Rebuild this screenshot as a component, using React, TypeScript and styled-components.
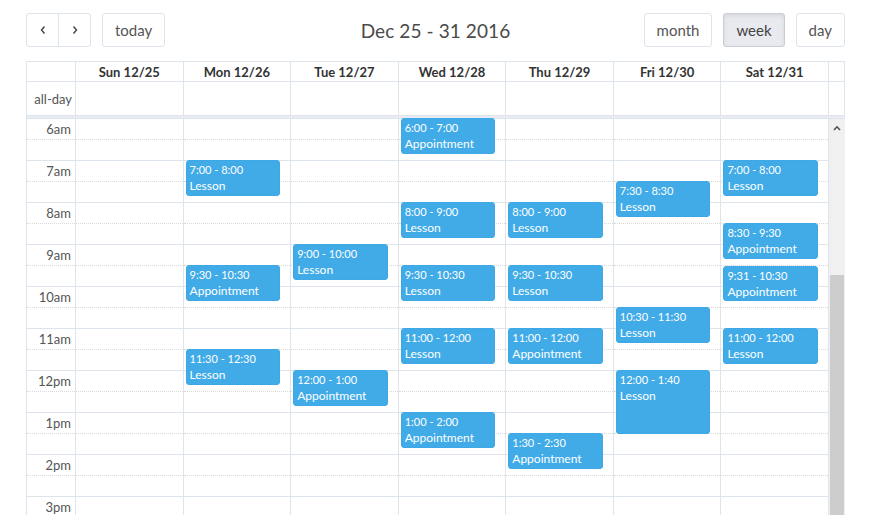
import React from 'react';
import styled, { createGlobalStyle } from 'styled-components';

const GlobalStyle = createGlobalStyle`
    html, body {
        margin: 0;
        padding: 0;
        overflow: hidden;
        background: #ffffff;
        font-family: Lato, "Open Sans", "Liberation Sans", sans-serif;
    }
`;

const HOUR_HEIGHT = 42;
const FIRST_HOUR = 6;
const LINE = '#dde4ec';

interface CalEvent {
    day: number;
    start: string;
    end: string;
    title: string;
}

const days = ['Sun 12/25', 'Mon 12/26', 'Tue 12/27', 'Wed 12/28', 'Thu 12/29', 'Fri 12/30', 'Sat 12/31'];
const hours = ['6am', '7am', '8am', '9am', '10am', '11am', '12pm', '1pm', '2pm', '3pm', '4pm'];

const events: CalEvent[] = [
    { day: 1, start: '7:00', end: '8:00', title: 'Lesson' },
    { day: 1, start: '9:30', end: '10:30', title: 'Appointment' },
    { day: 1, start: '11:30', end: '12:30', title: 'Lesson' },
    { day: 2, start: '9:00', end: '10:00', title: 'Lesson' },
    { day: 2, start: '12:00', end: '1:00', title: 'Appointment' },
    { day: 3, start: '6:00', end: '7:00', title: 'Appointment' },
    { day: 3, start: '8:00', end: '9:00', title: 'Lesson' },
    { day: 3, start: '9:30', end: '10:30', title: 'Lesson' },
    { day: 3, start: '11:00', end: '12:00', title: 'Lesson' },
    { day: 3, start: '1:00', end: '2:00', title: 'Appointment' },
    { day: 4, start: '8:00', end: '9:00', title: 'Lesson' },
    { day: 4, start: '9:30', end: '10:30', title: 'Lesson' },
    { day: 4, start: '11:00', end: '12:00', title: 'Appointment' },
    { day: 4, start: '1:30', end: '2:30', title: 'Appointment' },
    { day: 5, start: '7:30', end: '8:30', title: 'Lesson' },
    { day: 5, start: '10:30', end: '11:30', title: 'Lesson' },
    { day: 5, start: '12:00', end: '1:40', title: 'Lesson' },
    { day: 6, start: '7:00', end: '8:00', title: 'Lesson' },
    { day: 6, start: '8:30', end: '9:30', title: 'Appointment' },
    { day: 6, start: '9:31', end: '10:30', title: 'Appointment' },
    { day: 6, start: '11:00', end: '12:00', title: 'Lesson' },
];

// times are written 12h without am/pm, anything below 6 is afternoon
const toMinutes = (t: string): number => {
    const [h, m] = t.split(':').map(Number);
    const hour = h < 6 ? h + 12 : h;
    return hour * 60 + m;
};

const Page = styled.div`
    padding: 13px 0 0 26px;
    width: 819px;
`;

const Toolbar = styled.div`
    display: grid;
    grid-template-columns: 1fr auto 1fr;
    align-items: center;
    height: 34px;
    margin-bottom: 14px;
`;

const ToolGroup = styled.div<{ $right?: boolean }>`
    display: flex;
    gap: 11px;
    justify-content: ${(p) => (p.$right ? 'flex-end' : 'flex-start')};
`;

const ButtonGroup = styled.div`
    display: flex;
`;

const Button = styled.button<{ $active?: boolean; $square?: boolean; $joinLeft?: boolean; $joinRight?: boolean }>`
    height: 34px;
    min-width: ${(p) => (p.$square ? '33px' : 'auto')};
    padding: ${(p) => (p.$square ? '0' : '0 12px')};
    display: flex;
    align-items: center;
    justify-content: center;
    font-family: Lato, "Open Sans", sans-serif;
    font-size: 15px;
    color: ${(p) => (p.$active ? '#444' : '#555')};
    background: ${(p) => (p.$active ? '#e9e9f0' : '#ffffff')};
    border: 1px solid ${(p) => (p.$active ? '#c8ced6' : '#dde4ec')};
    box-shadow: ${(p) => (p.$active ? 'inset 0 2px 4px rgba(0,0,0,0.08)' : 'none')};
    border-radius: ${(p) =>
        p.$joinLeft ? '0 3px 3px 0' : p.$joinRight ? '3px 0 0 3px' : '3px'};
    margin-left: ${(p) => (p.$joinLeft ? '-1px' : '0')};
`;

const Title = styled.h2`
    margin: 0;
    font-size: 19px;
    font-weight: 400;
    color: #4a4a4a;
    letter-spacing: 0.1px;
`;

const Calendar = styled.div`
    border: 1px solid ${LINE};
    border-right: none;
    border-bottom: none;
`;

const HeadRow = styled.div<{ $height: number }>`
    display: grid;
    grid-template-columns: 49px repeat(7, 1fr) 16px;
    height: ${(p) => p.$height}px;
    border-bottom: 1px solid ${LINE};
`;

const HeadCell = styled.div`
    border-right: 1px solid ${LINE};
    font-size: 13px;
    font-weight: 700;
    color: #333;
    display: flex;
    align-items: center;
    justify-content: center;
`;

const AxisLabel = styled.div`
    border-right: 1px solid ${LINE};
    font-size: 13px;
    color: #555;
    text-align: right;
    padding: 9px 3px 0 0;
`;

const PlainCell = styled.div<{ $edge?: boolean }>`
    border-right: 1px solid ${LINE};
`;

const Divider = styled.div`
    height: 2px;
    background: #e9edf1;
    border-bottom: 1px solid ${LINE};
`;

const Body = styled.div`
    display: flex;
`;

const TimeGrid = styled.div`
    flex: 1;
    display: grid;
    grid-template-columns: 49px repeat(7, 1fr);
`;

const Column = styled.div`
    position: relative;
    border-right: 1px solid ${LINE};
`;

const HourSlot = styled.div`
    height: ${HOUR_HEIGHT}px;
    box-sizing: border-box;
    border-bottom: 1px solid ${LINE};
    display: flex;
    flex-direction: column;
`;

const HalfSlot = styled.div<{ $dotted?: boolean }>`
    flex: 1;
    border-top: ${(p) => (p.$dotted ? '1px dotted #d9d9d9' : 'none')};
    font-size: 13px;
    color: #555;
    text-align: right;
    padding: 2px 4px 0 0;
`;

const Event = styled.div`
    position: absolute;
    left: 2px;
    right: 10px;
    box-sizing: border-box;
    background: #41abe8;
    border: 1px solid #3ea8e6;
    border-radius: 3px;
    color: #ffffff;
    padding: 1px 3px 0;
    overflow: hidden;
`;

const EventTime = styled.div`
    font-size: 11px;
    line-height: 16px;
`;

const EventTitle = styled.div`
    font-size: 12px;
    line-height: 15px;
`;

const ScrollTrack = styled.div`
    width: 16px;
    background: #f0f0f0;
    display: flex;
    flex-direction: column;
    align-items: stretch;
`;

const ScrollArrow = styled.div`
    height: 156px;
    display: flex;
    justify-content: center;
    padding-top: 6px;
    box-sizing: border-box;
`;

const ScrollThumb = styled.div`
    flex: 1;
    margin: 0 1px;
    background: #cdcdcd;
`;

const Chevron = ({ dir }: { dir: 'left' | 'right' }) => (
    <svg width="8" height="10" viewBox="0 0 8 10">
        <polyline
            points={dir === 'left' ? '5.5,1.5 2.5,5 5.5,8.5' : '2.5,1.5 5.5,5 2.5,8.5'}
            fill="none"
            stroke="#444"
            strokeWidth="1.4"
        />
    </svg>
);

export default function App() {
    return (
        <>
            <GlobalStyle />
            <Page>
                <Toolbar>
                    <ToolGroup>
                        <ButtonGroup>
                            <Button $square $joinRight><Chevron dir="left" /></Button>
                            <Button $square $joinLeft><Chevron dir="right" /></Button>
                        </ButtonGroup>
                        <Button>today</Button>
                    </ToolGroup>
                    <Title>Dec 25 - 31 2016</Title>
                    <ToolGroup $right>
                        <Button>month</Button>
                        <Button $active>week</Button>
                        <Button>day</Button>
                    </ToolGroup>
                </Toolbar>
                <Calendar>
                    <HeadRow $height={19}>
                        <PlainCell />
                        {days.map((d) => (
                            <HeadCell key={d}>{d}</HeadCell>
                        ))}
                        <PlainCell />
                    </HeadRow>
                    <HeadRow $height={33}>
                        <AxisLabel>all-day</AxisLabel>
                        {days.map((d) => (
                            <PlainCell key={d} />
                        ))}
                        <PlainCell />
                    </HeadRow>
                    <Divider />
                    <Body>
                        <TimeGrid>
                            <Column>
                                {hours.map((h) => (
                                    <HourSlot key={h}>
                                        <HalfSlot>{h}</HalfSlot>
                                        <HalfSlot $dotted />
                                    </HourSlot>
                                ))}
                            </Column>
                            {days.map((d, i) => (
                                <Column key={d}>
                                    {hours.map((h) => (
                                        <HourSlot key={h}>
                                            <HalfSlot />
                                            <HalfSlot $dotted />
                                        </HourSlot>
                                    ))}
                                    {events
                                        .filter((e) => e.day === i)
                                        .map((e) => {
                                            const s = toMinutes(e.start);
                                            const dur = toMinutes(e.end) - s;
                                            const top = ((s - FIRST_HOUR * 60) * HOUR_HEIGHT) / 60 - 1;
                                            const height = (dur * HOUR_HEIGHT) / 60 - 6;
                                            return (
                                                <Event key={e.start} style={{ top, height }}>
                                                    <EventTime>{`${e.start} - ${e.end}`}</EventTime>
                                                    <EventTitle>{e.title}</EventTitle>
                                                </Event>
                                            );
                                        })}
                                </Column>
                            ))}
                        </TimeGrid>
                        <ScrollTrack>
                            <ScrollArrow>
                                <svg width="8" height="6" viewBox="0 0 8 6">
                                    <polyline points="1,5 4,1.8 7,5" fill="none" stroke="#505050" strokeWidth="1.6" />
                                </svg>
                            </ScrollArrow>
                            <ScrollThumb />
                        </ScrollTrack>
                    </Body>
                </Calendar>
            </Page>
        </>
    );
}
